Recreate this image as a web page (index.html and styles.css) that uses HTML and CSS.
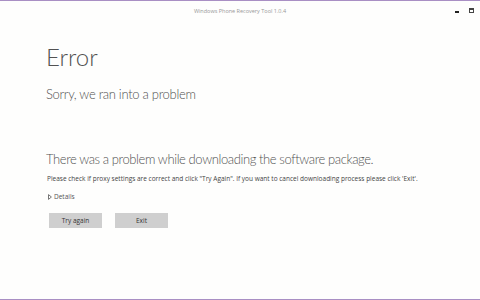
FILE: index.html
```html
<!DOCTYPE html>
<html lang="en">
<head>
    <meta charset="UTF-8">
    <title>Windows Phone Recovery Tool 1.0.4</title>
    <link rel="stylesheet" href="styles.css">
</head>
<body>
<div class="window">
    <div class="titlebar">
        <span class="title">Windows Phone Recovery Tool 1.0.4</span>
        <div class="controls">
            <span class="btn-min"></span>
            <span class="btn-max"></span>
        </div>
    </div>
    <div class="content">
        <h1>Error</h1>
        <h2>Sorry, we ran into a problem</h2>
        <p class="message">There was a problem while downloading the software package.</p>
        <p class="hint">Please check if proxy settings are correct and click "Try Again". If you want to cancel downloading process please click 'Exit'.</p>
        <div class="details">
            <svg class="arrow" width="4" height="6" viewBox="0 0 4 6"><path d="M0.5 0.6 L3.4 3 L0.5 5.4 Z" fill="none" stroke="#666" stroke-width="0.9"/></svg>
            Details
        </div>
        <div class="actions">
            <button>Try again</button>
            <button>Exit</button>
        </div>
    </div>
</div>
</body>
</html>
```

FILE: styles.css
```css
html, body {
    margin: 0;
    padding: 0;
}
body {
    font-family: "Open Sans", "Liberation Sans", sans-serif;
    background-color: #fefefd;
    color: #555;
}
.window {
    height: 300px;
    box-sizing: border-box;
    border-top: 1px solid #a98fc4;
    border-bottom: 1px solid #a98fc4;
    display: flex;
    flex-direction: column;
}
.titlebar {
    position: relative;
    height: 19px;
    display: flex;
    align-items: center;
    justify-content: center;
}
.title {
    font-size: 5.5px;
    color: #999;
}
.controls {
    position: absolute;
    right: 6px;
    top: 7px;
    display: flex;
    align-items: flex-start;
    gap: 10px;
}
.btn-min {
    width: 4px;
    height: 2px;
    background-color: #222;
    margin-top: 3px;
}
.btn-max {
    width: 3px;
    height: 2px;
    border: 1px solid #444;
    border-top-width: 2px;
}
.content {
    padding: 0 0 0 46px;
}
h1, h2, .message {
    font-family: Lato, "Open Sans", sans-serif;
    font-weight: 300;
    line-height: 1;
    color: #525252;
}
h1 {
    font-size: 24px;
    margin: 25px 0 0 0;
}
h2 {
    font-size: 13px;
    letter-spacing: -0.3px;
    margin: 19px 0 0 0;
}
.message {
    font-size: 13px;
    letter-spacing: -0.4px;
    margin: 52px 0 0 0;
}
.hint {
    font-size: 6.5px;
    line-height: 1;
    margin: 10px 0 0 1px;
    color: #444;
}
.details {
    font-size: 6.5px;
    line-height: 1;
    margin: 11px 0 0 2px;
    color: #555;
    display: flex;
    align-items: center;
    gap: 2px;
}
.actions {
    display: flex;
    gap: 13px;
    margin: 13px 0 0 3px;
}
button {
    width: 53px;
    height: 15px;
    padding: 0;
    border: none;
    background-color: #cfcfcf;
    font-family: "Open Sans", "Liberation Sans", sans-serif;
    font-size: 6.5px;
    color: #333;
}
```
